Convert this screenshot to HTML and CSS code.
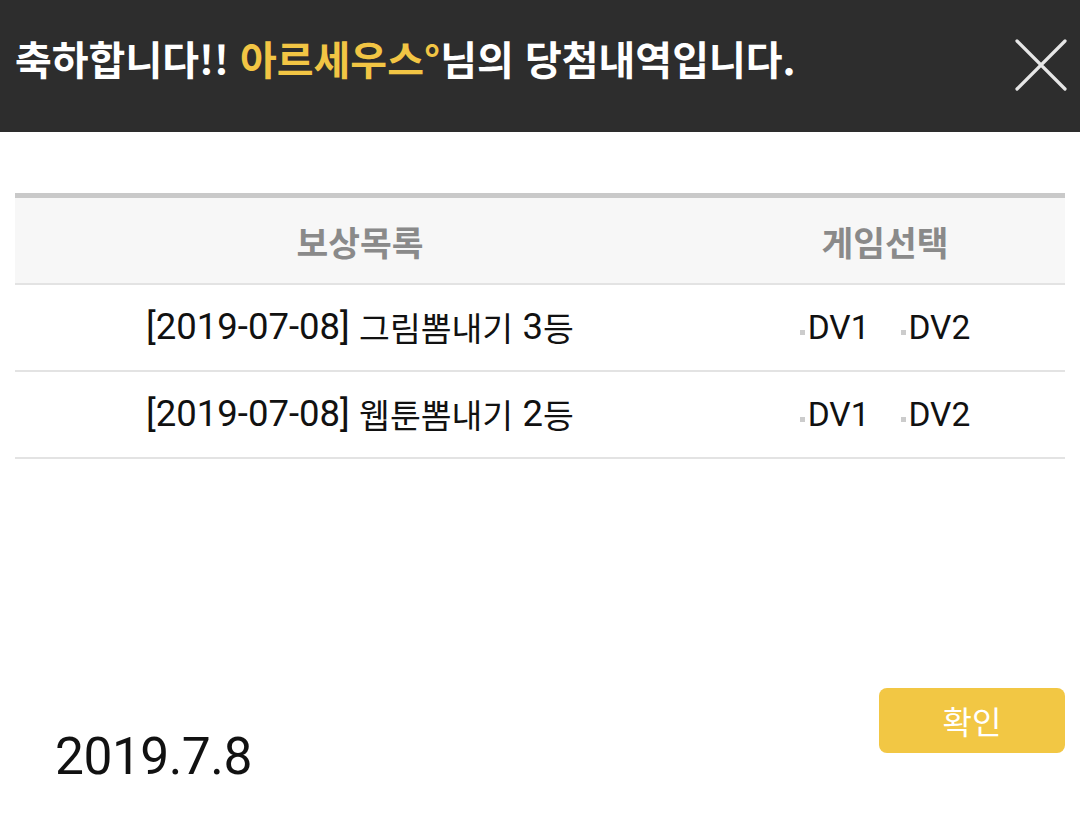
FILE: index.html
```html
<!DOCTYPE html>
<html lang="ko">
<head>
<meta charset="utf-8">
<title>당첨내역</title>
<link rel="stylesheet" href="styles.css">
</head>
<body>
<div class="popup">
  <header class="topbar">
    <h1 class="title">축하합니다!! <span class="nick">아르세우스°</span>님의 당첨내역입니다.</h1>
    <button class="close" aria-label="닫기">
      <svg width="52" height="52" viewBox="0 0 52 52"><path d="M2 2 L50 50 M50 2 L2 50" stroke="#e6e6e6" stroke-width="3.2" stroke-linecap="round" fill="none"/></svg>
    </button>
  </header>

  <div class="content">
    <div class="table">
      <div class="row head">
        <div class="cell c1">보상목록</div>
        <div class="cell c2">게임선택</div>
      </div>
      <div class="row">
        <div class="cell c1"><span class="lat">[2019-07-08]</span> 그림뽐내기 <span class="lat">3</span>등</div>
        <div class="cell c2"><span class="dv">DV1</span><span class="dv">DV2</span></div>
      </div>
      <div class="row">
        <div class="cell c1"><span class="lat">[2019-07-08]</span> 웹툰뽐내기 <span class="lat">2</span>등</div>
        <div class="cell c2"><span class="dv">DV1</span><span class="dv">DV2</span></div>
      </div>
    </div>
  </div>

  <footer class="footer">
    <div class="date">2019.7.8</div>
    <button class="ok">확인</button>
  </footer>
</div>
</body>
</html>
```

FILE: styles.css
```css
html, body {
  margin: 0;
  padding: 0;
  background: #ffffff;
}
body {
  width: 1080px;
  height: 820px;
  overflow: hidden;
  font-family: Roboto, "Noto Sans CJK KR", sans-serif;
}
.topbar {
  height: 132px;
  background: #2d2d2d;
  display: flex;
  align-items: center;
  justify-content: space-between;
  padding: 0 13px 16px 15px;
  box-sizing: border-box;
}
.title {
  margin: 0;
  font-family: "Noto Sans CJK KR", sans-serif;
  font-size: 40px;
  font-weight: 700;
  color: #ffffff;
  line-height: 1;
}
.nick {
  color: #f2c544;
}
.close {
  background: none;
  border: 0;
  padding: 0;
  width: 52px;
  height: 52px;
  display: flex;
  margin-top: 14px;
}
.content {
  padding: 61px 15px 0;
}
.table {
  border-top: 5px solid #c9c9c9;
}
.row {
  display: flex;
  height: 85px;
  border-bottom: 2px solid #e3e3e3;
  align-items: center;
}
.row.head {
  background: #f7f7f7;
}
.cell {
  display: flex;
  align-items: center;
  justify-content: center;
  white-space: pre;
}
.c1 {
  width: 690px;
}
.c2 {
  flex: 1;
  gap: 31px;
}
.head .cell {
  font-family: "Noto Sans CJK KR", sans-serif;
  font-weight: 700;
  font-size: 34.5px;
  color: #8a8a8a;
}
.row:not(.head) .cell {
  font-family: "Noto Sans CJK KR", sans-serif;
  font-size: 33.5px;
  color: #111111;
}
.row:not(.head) .c1 {
  padding-bottom: 2px;
}
.lat {
  font-family: Roboto, sans-serif;
  font-size: 36.5px;
}
.dv {
  font-family: Roboto, sans-serif;
  font-size: 33.5px !important;
  color: #111;
  display: flex;
  align-items: center;
}
.dv::before {
  content: "";
  width: 5px;
  height: 5px;
  background: #cccccc;
  margin-right: 3px;
  margin-top: 9px;
}
.footer {
  display: flex;
  justify-content: space-between;
  align-items: flex-start;
  padding: 0 15px 0 55px;
  margin-top: 229px;
}
.date {
  font-family: Roboto, sans-serif;
  font-size: 51.5px;
  color: #111111;
  line-height: 1;
  margin-top: 43px;
  letter-spacing: -0.5px;
}
.ok {
  width: 186px;
  height: 65px;
  border: 0;
  border-radius: 8px;
  background: #f2c744;
  color: #ffffff;
  font-family: "Noto Sans CJK KR", sans-serif;
  font-size: 32px;
  padding: 0 0 2px;
}
```
